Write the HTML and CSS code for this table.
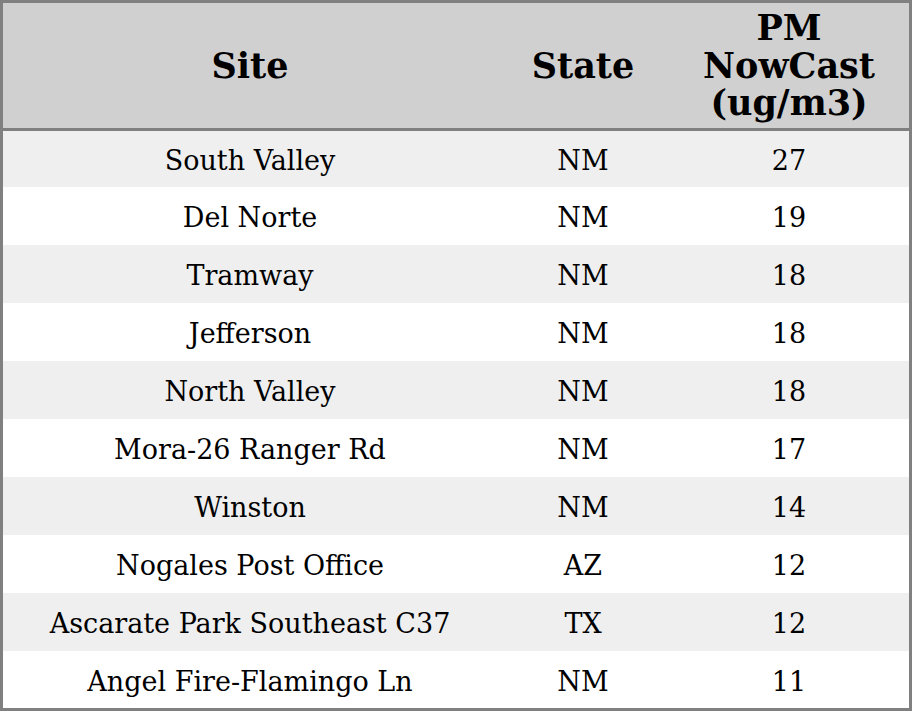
FILE: index.html
```html
<!DOCTYPE html>
<html>
<head>
<meta charset="utf-8">
<link rel="stylesheet" href="styles.css">
</head>
<body>
<table class="aq-table">
  <colgroup>
    <col class="c-site">
    <col class="c-state">
    <col class="c-pm">
  </colgroup>
  <thead>
    <tr class="head-row">
      <th>Site</th>
      <th>State</th>
      <th>PM<br>NowCast<br>(ug/m3)</th>
    </tr>
  </thead>
  <tbody>
    <tr class="alt first"><td>South Valley</td><td>NM</td><td>27</td></tr>
    <tr><td>Del Norte</td><td>NM</td><td>19</td></tr>
    <tr class="alt"><td>Tramway</td><td>NM</td><td>18</td></tr>
    <tr><td>Jefferson</td><td>NM</td><td>18</td></tr>
    <tr class="alt"><td>North Valley</td><td>NM</td><td>18</td></tr>
    <tr><td>Mora-26 Ranger Rd</td><td>NM</td><td>17</td></tr>
    <tr class="alt"><td>Winston</td><td>NM</td><td>14</td></tr>
    <tr><td>Nogales Post Office</td><td>AZ</td><td>12</td></tr>
    <tr class="alt"><td>Ascarate Park Southeast C37</td><td>TX</td><td>12</td></tr>
    <tr class="last"><td>Angel Fire-Flamingo Ln</td><td>NM</td><td>11</td></tr>
  </tbody>
</table>
</body>
</html>
```
FILE: styles.css
```css
html, body {
  margin: 0;
  padding: 0;
  background: #ffffff;
}

.aq-table {
  width: 912px;
  border: 3px solid #808080;
  border-collapse: separate;
  border-spacing: 0;
  table-layout: fixed;
  font-family: "DejaVu Serif", serif;
  color: #000000;
}

.c-site { width: 494px; }
.c-state { width: 172px; }
.c-pm { width: 240px; }

.head-row {
  height: 128px;
}

.head-row th {
  padding: 0;
  background: #d0d0d0;
  border-bottom: 3px solid #808080;
  font-size: 35px;
  font-weight: bold;
  line-height: 37.5px;
  text-align: center;
  vertical-align: middle;
}

tbody tr {
  height: 58px;
}

tbody tr.first {
  height: 56px;
}

tbody tr.last {
  height: 57px;
}

tbody td {
  padding: 4px 0 0 0;
  font-size: 27px;
  line-height: 30px;
  text-align: center;
  vertical-align: middle;
  background: #ffffff;
}

tbody tr.alt td {
  background: #efefef;
}
```
